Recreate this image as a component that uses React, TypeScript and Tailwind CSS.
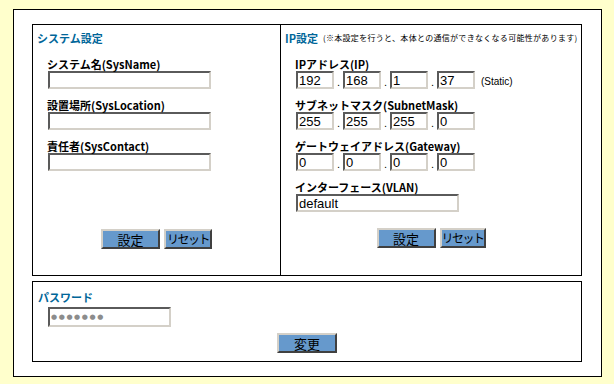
const jp = "font-['MS_UI_Gothic','Noto_Sans_CJK_JP',sans-serif]";

function Field({ value = "", w = "w-[163px]", h = "h-[18px]", text = "text-[13px] text-black font-['Liberation_Sans',Arial,sans-serif]" }: { value?: string; w?: string; h?: string; text?: string }) {
  return (
    <input
      type="text"
      readOnly
      defaultValue={value}
      className={`block ${w} ${h} bg-white border-2 border-t-[#5a5a5a] border-l-[#5a5a5a] border-b-[#d4d0c8] border-r-[#d4d0c8] pl-[1px] leading-none ${text} outline-none`}
    />
  );
}

function Btn({ label, w, text = "text-[13px]" }: { label: string; w: string; text?: string }) {
  return (
    <button
      className={`${w} h-[20px] bg-[#6699cc] border-2 border-t-[#d4d0c8] border-l-[#d4d0c8] border-b-[#404040] border-r-[#404040] ${text} leading-none whitespace-nowrap text-black ${jp}`}
    >
      {label}
    </button>
  );
}

function Label({ children }: { children: React.ReactNode }) {
  return <div className={`h-[14px] leading-[14px] text-[11px] font-bold text-black pl-[14px] whitespace-nowrap ${jp}`}>{children}</div>;
}

function Quad({ values }: { values: string[] }) {
  return (
    <div className="flex items-end pl-[15px]">
      {values.map((v, i) => (
        <div key={i} className="flex items-end">
          <Field value={v} w="w-[38px]" />
          {i < 3 && <span className="w-[9px] text-center text-[11px] leading-[14px] font-['Liberation_Sans',Arial,sans-serif]">.</span>}
        </div>
      ))}
    </div>
  );
}

export default function App() {
  return (
    <div className="w-[614px] h-[384px] bg-[#ffffcc] pt-[9px] pl-[13px]">
      <div className="w-[589px] h-[368px] border border-black bg-white pt-[14px] pl-[18px]">

        {/* upper table */}
        <div className="w-[550px] h-[252px] border border-black flex">

          {/* system settings */}
          <div className="w-[248px] border-r border-black flex flex-col pt-[7px]">
            <div className={`pl-[4px] h-[12px] leading-[12px] text-[11px] font-bold text-[#006699] ${jp}`}>システム設定</div>
            <div className="mt-[13px] flex flex-col gap-[9px]">
              <div>
                <Label>システム名(SysName)</Label>
                <div className="pl-[15px]"><Field /></div>
              </div>
              <div>
                <Label>設置場所(SysLocation)</Label>
                <div className="pl-[15px]"><Field /></div>
              </div>
              <div>
                <Label>責任者(SysContact)</Label>
                <div className="pl-[15px]"><Field /></div>
              </div>
            </div>
            <div className="mt-auto pb-[26px] flex justify-center gap-[4px]">
              <Btn label="設定" w="w-[59px]" />
              <Btn label="リセット" w="w-[48px]" text="text-[12px] tracking-[-1.5px]" />
            </div>
          </div>

          {/* IP settings */}
          <div className="flex-1 flex flex-col pt-[7px]">
            <div className={`pl-[4px] h-[12px] leading-[12px] flex items-end whitespace-nowrap ${jp}`}>
              <span className="text-[11px] font-bold text-[#006699]">IP設定</span>
              <span className="ml-[5px] text-[8px] tracking-[0.3px] text-black">(※本設定を行うと、本体との通信ができなくなる可能性があります)</span>
            </div>
            <div className="mt-[13px] flex flex-col gap-[9px]">
              <div>
                <Label>IPアドレス(IP)</Label>
                <div className="flex items-end">
                  <Quad values={["192", "168", "1", "37"]} />
                  <span className="ml-[6px] text-[10px] leading-[14px] font-['Liberation_Sans',Arial,sans-serif]">(Static)</span>
                </div>
              </div>
              <div>
                <Label>サブネットマスク(SubnetMask)</Label>
                <Quad values={["255", "255", "255", "0"]} />
              </div>
              <div>
                <Label>ゲートウェイアドレス(Gateway)</Label>
                <Quad values={["0", "0", "0", "0"]} />
              </div>
              <div>
                <Label>インターフェース(VLAN)</Label>
                <div className="pl-[15px]"><Field value="default" /></div>
              </div>
            </div>
            <div className="mt-auto pb-[27px] flex justify-center gap-[4px]">
              <Btn label="設定" w="w-[59px]" />
              <Btn label="リセット" w="w-[46px]" text="text-[12px] tracking-[-1.5px]" />
            </div>
          </div>
        </div>

        {/* password */}
        <div className="mt-[5px] w-[550px] h-[81px] border border-black pt-[9px]">
          <div className={`pl-[5px] h-[12px] leading-[12px] text-[11px] font-bold text-[#006699] ${jp}`}>パスワード</div>
          <div className="mt-[4px] pl-[15px]">
            <Field
              value="●●●●●●●"
              w="w-[123px]"
              h="h-[20px]"
              text="text-[7px] tracking-[1.6px] text-[#8c8c8c] font-['DejaVu_Sans',sans-serif]"
            />
          </div>
          <div className="mt-[6px] flex justify-center">
            <Btn label="変更" w="w-[60px]" />
          </div>
        </div>

      </div>
    </div>
  );
}
